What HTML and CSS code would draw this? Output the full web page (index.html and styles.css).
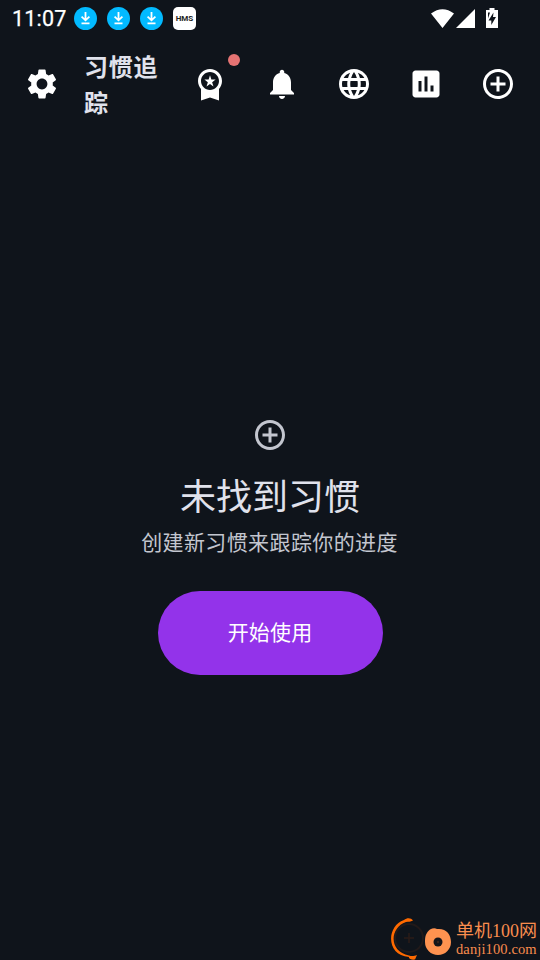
FILE: index.html
```html
<!DOCTYPE html>
<html lang="zh-CN">
<head>
<meta charset="utf-8">
<title>习惯追踪</title>
<link rel="stylesheet" href="styles.css">
</head>
<body>
<svg class="defs" width="0" height="0">
  <symbol id="add" viewBox="0 0 24 24"><path d="M13 7h-2v4H7v2h4v4h2v-4h4v-2h-4V7zm-1-5C6.48 2 2 6.48 2 12s4.48 10 10 10 10-4.48 10-10S17.52 2 12 2zm0 18c-4.41 0-8-3.59-8-8s3.59-8 8-8 8 3.59 8 8-3.59 8-8 8z"/></symbol>
  <symbol id="download" viewBox="0 0 23 23"><circle cx="11.5" cy="11.5" r="11.5" fill="#02baff"/><path d="M11.500 5v8M7.600 9.600l3.900 3.700 3.900-3.700M7.500 16.300h8" fill="none" stroke="#fff" stroke-width="1.800"/></symbol>
</svg>
<div class="screen">
  <header class="status">
    <span class="time">11:07</span>
    <div class="notices">
      <svg class="notice"><use href="#download"/></svg>
      <svg class="notice"><use href="#download"/></svg>
      <svg class="notice"><use href="#download"/></svg>
      <span class="hms">HMS</span>
    </div>
    <svg class="signals" viewBox="0 0 68 22"><path d="M0 5.500Q11.500-3 23 5.500L11.500 20zM25 20L44 1v19z"/><path fill-rule="evenodd" d="M58.500 0h5v2H67v18H55V2h3.500zM57 4.500v6l2-6zM62.500 4.500l-5 8h2.800V17l4.700-8h-3z"/></svg>
  </header>
  <nav class="bar">
    <svg class="icon" viewBox="0 0 24 24"><path d="M19.14 12.94c.04-.3.06-.61.06-.94 0-.32-.02-.64-.07-.94l2.03-1.58c.18-.14.23-.41.12-.61l-1.92-3.32c-.12-.22-.37-.29-.59-.22l-2.39.96c-.5-.38-1.03-.7-1.62-.94l-.36-2.54c-.04-.24-.24-.41-.48-.41h-3.84c-.24 0-.43.17-.47.41l-.36 2.54c-.59.24-1.13.57-1.62.94l-2.39-.96c-.22-.08-.47 0-.59.22L2.74 8.87c-.12.21-.08.47.12.61l2.03 1.58c-.05.3-.09.63-.09.94s.02.64.07.94l-2.03 1.58c-.18.14-.23.41-.12.61l1.92 3.32c.12.22.37.29.59.22l2.39-.96c.5.38 1.03.7 1.62.94l.36 2.54c.05.24.24.41.48.41h3.84c.24 0 .44-.17.47-.41l.36-2.54c.59-.24 1.13-.56 1.62-.94l2.39.96c.22.08.47 0 .59-.22l1.92-3.32c.12-.22.07-.47-.12-.61l-2.01-1.58zM12 15.6c-1.98 0-3.6-1.62-3.6-3.6s1.62-3.6 3.6-3.6 3.6 1.62 3.6 3.6-1.62 3.6-3.6 3.6z"/></svg>
    <h1 class="title">习惯追踪</h1>
    <div class="actions">
      <span class="award">
        <svg class="icon" viewBox="0 0 24 24"><path d="M9.68 13.69L12 11.93l2.31 1.76-.88-2.85L15.75 9h-2.84L12 6.19 11.09 9H8.25l2.31 1.84-.88 2.85zM20 10c0-4.42-3.58-8-8-8s-8 3.58-8 8c0 2.03.76 3.87 2 5.28V23l6-2 6 2v-7.720c1.240-1.410 2-3.250 2-5.280zm-8-6c3.310 0 6 2.690 6 6s-2.690 6-6 6-6-2.690-6-6 2.690-6 6-6z"/></svg>
        <i class="badge"></i>
      </span>
      <svg class="icon" viewBox="0 0 24 24"><path d="M12 22c1.100 0 2-.9 2-2h-4c0 1.100.890 2 2 2zm6-6v-5c0-3.070-1.640-5.640-4.500-6.320V4c0-.83-.67-1.500-1.500-1.500s-1.500.67-1.500 1.500v.68C7.630 5.360 6 7.920 6 11v5l-2 2v1h16v-1l-2-2z"/></svg>
      <svg class="icon" viewBox="0 0 24 24"><path d="M11.99 2C6.47 2 2 6.48 2 12s4.47 10 9.99 10C17.52 22 22 17.52 22 12S17.52 2 11.99 2zm6.93 6h-2.95c-.32-1.25-.78-2.45-1.38-3.56 1.84.63 3.37 1.91 4.33 3.56zM12 4.04c.83 1.2 1.48 2.53 1.91 3.96h-3.82c.43-1.43 1.08-2.76 1.91-3.96zM4.26 14C4.1 13.36 4 12.69 4 12s.1-1.36.26-2h3.38c-.08.66-.14 1.32-.14 2 0 .68.06 1.34.14 2H4.26zm.82 2h2.95c.32 1.25.78 2.45 1.38 3.56-1.84-.63-3.37-1.9-4.33-3.56zm2.95-8H5.08c.96-1.66 2.49-2.93 4.33-3.56C8.81 5.55 8.35 6.75 8.03 8zM12 19.96c-.83-1.2-1.48-2.53-1.91-3.96h3.82c-.43 1.43-1.08 2.76-1.91 3.96zM14.34 14H9.66c-.09-.66-.16-1.32-.16-2 0-.68.07-1.35.16-2h4.68c.09.65.16 1.32.16 2 0 .68-.07 1.34-.16 2zm.25 5.56c.6-1.11 1.06-2.31 1.38-3.56h2.95c-.96 1.65-2.49 2.93-4.33 3.56zM16.36 14c.08-.66.14-1.32.14-2 0-.68-.06-1.34-.14-2h3.38c.16.64.26 1.31.26 2s-.1 1.36-.26 2h-3.38z"/></svg>
      <svg class="icon" viewBox="0 0 24 24"><path d="M19 3H5c-1.100 0-2 .9-2 2v14c0 1.100.9 2 2 2h14c1.100 0 2-.9 2-2V5c0-1.100-.9-2-2-2zM9 17H7v-7h2v7zm4 0h-2V7h2v10zm4 0h-2v-4h2v4z"/></svg>
      <svg class="icon"><use href="#add"/></svg>
    </div>
  </nav>
  <main class="empty">
    <svg class="icon empty-icon"><use href="#add"/></svg>
    <h2 class="heading">未找到习惯</h2>
    <p class="hint">创建新习惯来跟踪你的进度</p>
    <button class="start">开始使用</button>
  </main>
  <aside class="mark">
    <svg class="logo" viewBox="0 0 64 44"><circle cx="19" cy="22" r="14" fill="none" stroke="#211a1a" stroke-width="2"/><path d="M19 17v10M14 22h10" stroke="#2b1b18" stroke-width="1.500"/><path d="M23 4.500C21 1.500 17 1.500 14 4 -4 10-4 40 19 41c-1 2 3 3 6 2.500l2-4.500c-3 1-5 1.500-8 .5C-1 36-1 12 16 6c3-.5 4 0 7-1.500z" fill="#ff6a00"/><path d="M40 13.500q4-2 7-.5c9-1 14 5 14 13a13 13 0 0 1-26 0c0-6 1-9 5-12.500z" fill="#ff9350"/><circle cx="48" cy="26" r="4.500" fill="#15151a"/><circle cx="48" cy="26" r="1.200" fill="#3b241b"/></svg>
    <div class="mark-text"><span class="mark-name">单机100网</span><span class="mark-url">danji100.com</span></div>
  </aside>
</div>
</body>
</html>
```
FILE: styles.css
```css
* { box-sizing: border-box; }
body { margin: 0; background: #0f141b; font-family: Roboto, "Noto Sans CJK SC", sans-serif; }
.defs { display: block; }
.screen { position: relative; width: 540px; height: 960px; overflow: hidden; display: flex; flex-direction: column; }
.status { height: 36px; display: flex; align-items: center; padding: 0 41px 0 12px; color: #fff; }
.time { width: 62px; padding-top: 1px; font-size: 21.5px; font-weight: 400; letter-spacing: .2px; -webkit-text-stroke: .25px #fff; }
.notices { display: flex; gap: 10px; }
.notice { width: 23px; height: 23px; }
.hms { width: 23px; height: 23px; border-radius: 5px; background: #fff; color: #222; font-size: 8px; font-weight: 700; line-height: 23px; text-align: center; }
.signals { width: 68px; height: 22px; margin: 1px 0 0 auto; fill: #fff; }
.bar { height: 96px; display: flex; align-items: center; padding: 0 24px; }
.icon { display: block; width: 36px; height: 36px; fill: #fff; flex: none; }
.title { width: 84px; margin: 0 0 0 24px; padding-top: 3px; color: #e0e2ec; font-size: 24px; line-height: 36px; font-weight: 700; letter-spacing: .75px; }
.actions { display: flex; gap: 36px; margin-left: auto; }
.award { position: relative; }
.badge { position: absolute; left: 36px; top: -12px; width: 12px; height: 12px; border-radius: 50%; background: #e57373; }
.empty { flex: 1; display: flex; flex-direction: column; align-items: center; padding-top: 285px; }
.empty-icon { fill: #c3c6cf; }
.heading { margin: 18px 0 0; color: #e0e2ec; font-size: 36px; line-height: 54px; font-weight: 400; }
.hint { margin: 0 1px 0 0; color: #c3c6cf; font-size: 21px; line-height: 36px; letter-spacing: .38px; }
.start { margin-top: 30px; width: 225px; height: 84px; padding: 0 0 4px; border: 0; border-radius: 42px; background: #9333ea; color: #fff; font: inherit; font-size: 21px; letter-spacing: .15px; }
.mark { position: absolute; right: 2px; bottom: 0; height: 44px; display: flex; }
.logo { width: 64px; height: 44px; }
.mark-text { display: flex; flex-direction: column; width: 82px; margin-left: 2px; padding-top: 3px; color: #f98d4e; white-space: nowrap; }
.mark-name { font: 18px/25px "Liberation Serif", "Noto Sans CJK SC", serif; }
.mark-url { margin-top: -2px; font: 14.5px/14px "Liberation Serif", serif; letter-spacing: .12px; }
```
